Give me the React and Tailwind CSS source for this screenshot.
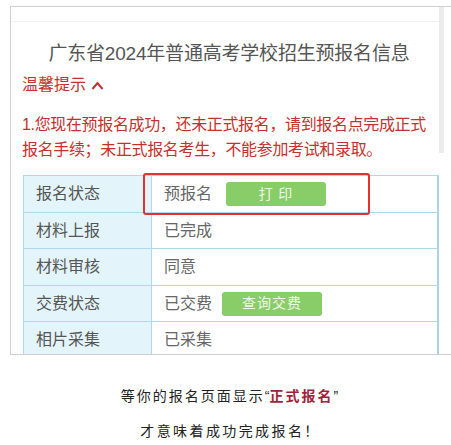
import React from "react";

const rows = [
  { label: "报名状态", value: "预报名", btn: "打 印", btnMl: "ml-[14px]", h: "h-[37px]" },
  { label: "材料上报", value: "已完成", h: "h-[36px]" },
  { label: "材料审核", value: "同意", h: "h-[37px]" },
  { label: "交费状态", value: "已交费", btn: "查询交费", btnMl: "ml-[10px]", h: "h-[36px]" },
  { label: "相片采集", value: "已采集", h: "h-[37px]" },
];

export default function App() {
  return (
    <div className="w-[451px] h-[445px] bg-white overflow-hidden font-['Liberation_Sans','Noto_Sans_CJK_SC',sans-serif]">
      <div className="ml-[10px] mt-[6px] h-[349px] border-l border-t border-b border-[#cfcfcf] flex overflow-hidden">
        <div className="w-[428px] shrink-0 flex flex-col">
          <div className="h-[15px] border-b border-[#f0f0f0] shrink-0" />
          <div className="mt-[18px] pl-[8px] text-center text-[19px] leading-[28px] text-[#555] tracking-[-0.2px]">
            广东省2024年普通高考学校招生预报名信息
          </div>
          <div className="mt-[5px] pl-[11px] flex items-center text-[16px] leading-[24px] text-[#c5302c]">
            <span>温馨提示</span>
            <svg className="ml-[5px]" width="13" height="9" viewBox="0 0 13 9" fill="none">
              <path d="M1.5 8 L6.5 2 L11.5 8" stroke="#c5302c" strokeWidth="2" />
            </svg>
          </div>
          <div className="mt-[15px] pl-[11px] text-[16px] leading-[25px] text-[#c5302c] tracking-[-0.35px]">
            <div>1.您现在预报名成功，还未正式报名，请到报名点完成正式</div>
            <div>报名手续；未正式报名考生，不能参加考试和录取。</div>
          </div>
          <div className="mt-[13px] ml-[12px] relative border-t border-l border-[#aed9ea]">
            {rows.map((r, i) => (
              <div key={i} className={`flex ${r.h} border-b border-[#aed9ea]`}>
                <div className="w-[128px] shrink-0 bg-[#e4f4fb] border-r border-[#aed9ea] flex items-center pl-[12px] text-[16px] text-[#555]">
                  {r.label}
                </div>
                <div className="flex-1 flex items-center pl-[12px] text-[16px] text-[#666] border-r-2 border-[#a9d3e8]">
                  <span>{r.value}</span>
                  {r.btn && (
                    <span
                      className={`${r.btnMl} w-[100px] h-[24px] rounded-[3px] bg-[#88cd67] flex items-center justify-center text-[14px] text-[#eef8e8] tracking-[1px] font-['Liberation_Serif','Noto_Sans_CJK_SC',serif]`}
                    >
                      {r.btn}
                    </span>
                  )}
                </div>
              </div>
            ))}
            <div className="absolute left-[119px] top-[-3px] w-[227px] h-[42px] border-2 border-[#e8302f] rounded-[3px]" />
          </div>
        </div>
        <div className="w-[5px] shrink-0">
          <div className="h-[146px] bg-[#ececec]" />
        </div>
      </div>
      <div className="mt-[30px] pl-[8px] text-center text-[14px] leading-[20px] tracking-[2px] text-[#222] font-['Noto_Sans_CJK_SC',sans-serif]">
        等你的报名页面显示<span className="font-['Liberation_Sans',sans-serif] tracking-[0px]">“</span><span className="text-[#a31f3c] font-semibold">正式报名</span><span className="font-['Liberation_Sans',sans-serif] tracking-[0px]">”</span>
      </div>
      <div className="mt-[14px] pl-[10px] text-center text-[14px] leading-[20px] tracking-[2.4px] text-[#222] font-['Noto_Sans_CJK_SC',sans-serif]">
        才意味着成功完成报名！
      </div>
    </div>
  );
}
